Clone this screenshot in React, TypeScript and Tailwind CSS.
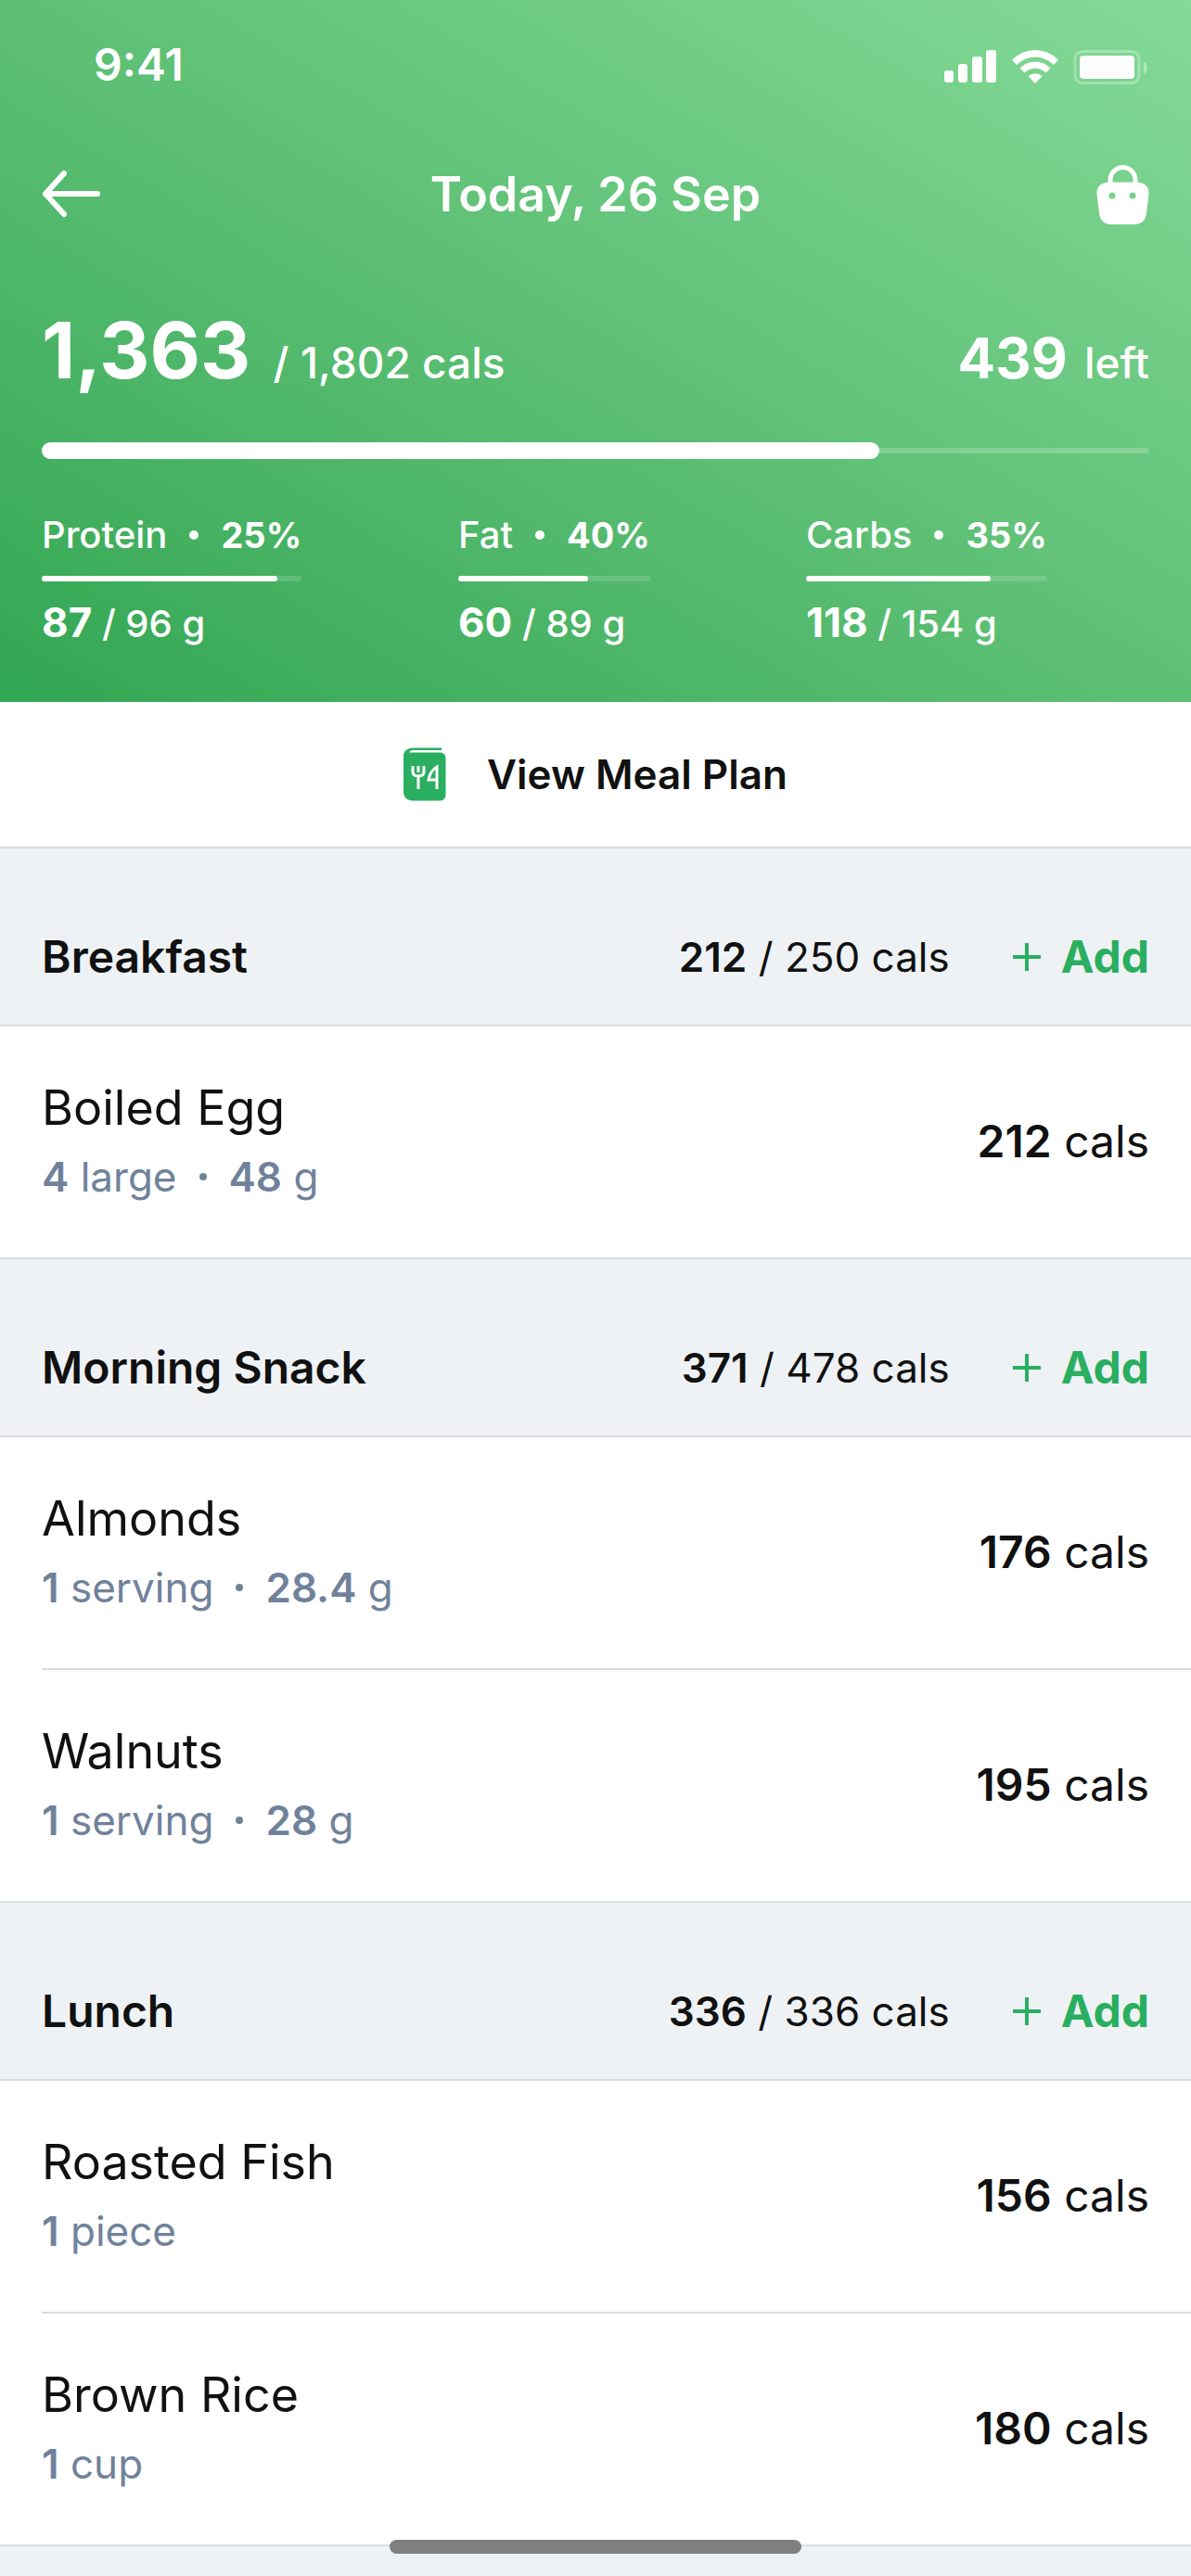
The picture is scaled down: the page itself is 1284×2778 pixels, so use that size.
import type { ReactNode } from 'react'

type Macro = {
  name: string
  percent: number
  current: number
  goal: number
}

type Food = {
  name: string
  amount: string
  unit: string
  grams?: string
  cals: number
}

type Meal = {
  name: string
  current: number
  goal: number
  foods: Food[]
}

const CALS = { current: 1363, goal: 1802 }

const MACROS: Macro[] = [
  { name: 'Protein', percent: 25, current: 87, goal: 96 },
  { name: 'Fat', percent: 40, current: 60, goal: 89 },
  { name: 'Carbs', percent: 35, current: 118, goal: 154 },
]

const MEALS: Meal[] = [
  {
    name: 'Breakfast',
    current: 212,
    goal: 250,
    foods: [{ name: 'Boiled Egg', amount: '4', unit: 'large', grams: '48', cals: 212 }],
  },
  {
    name: 'Morning Snack',
    current: 371,
    goal: 478,
    foods: [
      { name: 'Almonds', amount: '1', unit: 'serving', grams: '28.4', cals: 176 },
      { name: 'Walnuts', amount: '1', unit: 'serving', grams: '28', cals: 195 },
    ],
  },
  {
    name: 'Lunch',
    current: 336,
    goal: 336,
    foods: [
      { name: 'Roasted Fish', amount: '1', unit: 'piece', cals: 156 },
      { name: 'Brown Rice', amount: '1', unit: 'cup', cals: 180 },
    ],
  },
]

const toWidth = (current: number, goal: number) => `${(current / goal) * 100}%`

const Bold = ({ children }: { children: ReactNode }) => (
  <span className="font-semibold">{children}</span>
)

const StatusBar = () => (
  <div className="flex items-center justify-between pt-[40px] pr-[45px] pl-[101px]">
    <span className="text-[48px] leading-[60px] font-semibold">9:41</span>
    <svg viewBox="0 -6 222 44" className="h-[44px] w-[222px]" fill="currentColor">
      <rect x="1" y="22" width="10" height="13" rx="3" />
      <rect x="16" y="15" width="10" height="20" rx="3" />
      <rect x="31" y="7" width="11" height="28" rx="3" />
      <rect x="46" y="0" width="11" height="35" rx="3" />
      <path d="M74 10.5a35 35 0 0 1 50 0l-5 5.500a28 28 0 0 0-40 0z" />
      <path d="M82.500 19.500a23 23 0 0 1 33 0l-5 5a16.500 16.500 0 0 0-23 0z" />
      <path d="M91.500 28a11.500 11.500 0 0 1 15 0L99 36z" />
      <rect x="142" y="1.500" width="69" height="34" rx="8" fill="none" stroke="currentColor" strokeWidth="3" opacity=".3" />
      <rect x="147" y="6" width="59" height="25" rx="4" />
      <path d="M216 12.500v13c5-2 5-11 0-13z" opacity=".4" />
    </svg>
  </div>
)

const TopBar = () => (
  <div className="flex items-center justify-between px-[45px] pt-[78px]">
    <button aria-label="Back">
      <svg viewBox="0 0 64 64" className="size-[64px]" fill="none" stroke="currentColor" strokeWidth="6" strokeLinecap="round" strokeLinejoin="round">
        <path d="M60 31H4M24 9 4 31l20 22" />
      </svg>
    </button>
    <h1 className="text-[52px] leading-[64px] font-semibold">Today, 26 Sep</h1>
    <button aria-label="Shopping bag" className="flex w-[64px] justify-end">
      <svg viewBox="0 0 57 64" className="h-[64px] w-[57px]">
        <path d="M15 22V16a13.500 13.500 0 0 1 27 0v6" fill="none" stroke="currentColor" strokeWidth="5" />
        <path
          fill="currentColor"
          fillRule="evenodd"
          d="M14 18.500h29c9 0 14 5 13.500 13L54 52c-1 8-6 12-13 12H16C9 64 4 60 3 52L.5 31.500c-.5-8 4.500-13 13.500-13zM17 29.500a3.500 3.500 0 1 0 0 7 3.500 3.500 0 0 0 0-7zm22 0a3.500 3.500 0 1 0 0 7 3.500 3.500 0 0 0 0-7z"
        />
      </svg>
    </button>
  </div>
)

const MacroStat = ({ name, percent, current, goal }: Macro) => (
  <div className="w-fit">
    <p className="flex items-center text-[40px] leading-[48px] font-medium">
      {name}
      <span className="mx-[24px] size-[10px] rounded-full bg-white" />
      <span className="text-[38px] font-bold">{percent}%</span>
    </p>
    <div className="mt-[20px] h-[6px] rounded-full bg-white/15">
      <div className="h-full rounded-full bg-white" style={{ width: toWidth(current, goal) }} />
    </div>
    <p className="mt-[18px] text-[40px] leading-[52px] font-medium">
      <span className="text-[44px] font-bold">{current}</span> / {goal} g
    </p>
  </div>
)

const Summary = () => (
  <div className="px-[45px] pt-[92px] pb-[58px]">
    <div className="flex items-baseline justify-between text-[46px] leading-[88px] font-medium">
      <p>
        <span className="mr-[12px] text-[84px] font-bold">{CALS.current.toLocaleString('en-US')}</span> /{' '}
        {CALS.goal.toLocaleString('en-US')} cals
      </p>
      <p>
        <span className="mr-[6px] text-[60px] font-bold">{CALS.goal - CALS.current}</span> left
      </p>
    </div>
    <div className="mt-[42px] flex h-[18px] items-center">
      <div
        className="h-full rounded-full bg-white"
        style={{ width: toWidth(CALS.current, CALS.goal) }}
      />
      <div className="h-[6px] flex-1 rounded-r-full bg-white/20" />
    </div>
    <div className="mt-[58px] grid grid-cols-[449fr_375fr_370fr]">
      {MACROS.map((macro) => (
        <MacroStat key={macro.name} {...macro} />
      ))}
    </div>
  </div>
)

const MealPlanIcon = () => (
  <svg viewBox="0 0 46 58" className="h-[58px] w-[46px]" fill="none">
    <path d="M0 10C0 4 4 .5 10 .5h31V3H10C8 3 6.500 4 6 5.500h33c4 0 6.500 2.500 6.500 6.500v39c0 4-2.500 6.500-6.500 6.500H10C4 57.500 0 53.500 0 48z" fill="#2aae60" />
    <path d="M10 20v6c0 3.500 2.500 5 6 5s6-1.500 6-5v-6M16 20v7M16 31v14M36 45V21c-5 3-8 8-9 14h9" stroke="#fff" strokeWidth="3" />
  </svg>
)

const FoodRow = ({ name, amount, unit, grams, cals }: Food) => (
  <li className="ml-[45px] flex items-center justify-between border-t-2 border-[#d9dddf] pt-[56px] pr-[45px] pb-[57px] first:border-t-0">
    <div>
      <p className="text-[52px] leading-[64px]">{name}</p>
      <p className="mt-[12px] flex items-center text-[44px] leading-[60px] text-[#70829b]">
        <span>
          <Bold>{amount}</Bold> {unit}
        </span>
        {grams && (
          <>
            <span className="mx-[24px] size-[8px] rounded-full bg-current" />
            <span>
              <Bold>{grams}</Bold> g
            </span>
          </>
        )}
      </p>
    </div>
    <p className="text-[48px] leading-[64px]">
      <Bold>{cals}</Bold> cals
    </p>
  </li>
)

const MealSection = ({ name, current, goal, foods }: Meal) => (
  <section>
    <div className="flex items-center justify-between border-y-2 border-[#d9dddf] px-[45px] pt-[87px] pb-[43px] text-[44px] leading-[60px]">
      <h2 className="text-[48px] font-semibold">{name}</h2>
      <div className="flex items-center">
        <p>
          <Bold>{current}</Bold> / {goal} cals
        </p>
        <button className="ml-[68px] flex items-center gap-[22px] text-[48px] font-bold text-[#2aae60]">
          <svg viewBox="0 0 30 30" className="size-[30px]" stroke="currentColor" strokeWidth="4">
            <path d="M15 0v30M0 15h30" />
          </svg>
          Add
        </button>
      </div>
    </div>
    <ul className="bg-white">
      {foods.map((food) => (
        <FoodRow key={food.name} {...food} />
      ))}
    </ul>
  </section>
)

const App = () => (
  <div className="min-h-screen bg-[#eef2f5] font-['Inter',sans-serif] text-[#111]">
    <header className="bg-linear-to-tr from-[#30a653] to-[#84da97] text-white">
      <StatusBar />
      <TopBar />
      <Summary />
    </header>
    <button className="flex w-full items-center justify-center gap-[44px] bg-white py-[48px] text-[44px] leading-[60px] font-semibold">
      <MealPlanIcon />
      View Meal Plan
    </button>
    <main className="border-b-2 border-[#d9dddf]">
      {MEALS.map((meal) => (
        <MealSection key={meal.name} {...meal} />
      ))}
    </main>
    <div className="fixed bottom-[24px] left-1/2 h-[15px] w-[444px] -translate-x-1/2 rounded-full bg-[#7f7f80]" />
  </div>
)

export default App
